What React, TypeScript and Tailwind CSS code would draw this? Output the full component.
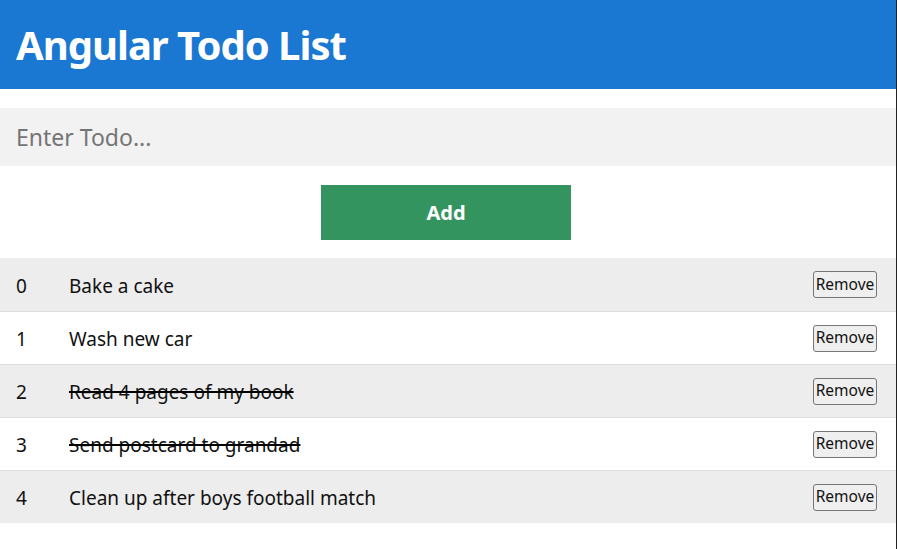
import React, { useState } from "react";

interface Todo {
    id: number;
    text: string;
    done: boolean;
}

const initialTodos: Todo[] = [
    { id: 0, text: "Bake a cake", done: false },
    { id: 1, text: "Wash new car", done: false },
    { id: 2, text: "Read 4 pages of my book", done: true },
    { id: 3, text: "Send postcard to grandad", done: true },
    { id: 4, text: "Clean up after boys football match", done: false },
];

export default function App() {
    const [todos, setTodos] = useState<Todo[]>(initialTodos);
    const [value, setValue] = useState("");

    const handleAdd = () => {
        if (value.trim() === "") return;
        setTodos([...todos, { id: todos.length, text: value, done: false }]);
        setValue("");
    };

    const handleRemove = (idx: number) => {
        setTodos(todos.filter((_, i) => i !== idx));
    };

    const toggle = (idx: number) => {
        setTodos(todos.map((t, i) => (i === idx ? { ...t, done: !t.done } : t)));
    };

    return (
        <div
            className="min-h-[549px] w-[897px] bg-white border-r border-[#222] text-[#111]"
            style={{ fontFamily: '"Noto Sans", "Open Sans", sans-serif' }}
        >
            <header className="h-[89px] bg-[#1a77d2] flex items-center px-4">
                <h1 className="text-[40px] font-bold text-white tracking-[-1px]">Angular Todo List</h1>
            </header>

            {/* input */}
            <input
                type="text"
                value={value}
                onChange={(e) => setValue(e.target.value)}
                placeholder="Enter Todo..."
                className="mt-[19px] block w-full h-[58px] bg-[#f2f2f2] px-4 text-[23px] outline-none placeholder:text-[#757575]"
            />

            <button
                onClick={handleAdd}
                className="mt-[19px] ml-[321px] block w-[250px] h-[55px] bg-[#33945f] text-white text-[20px] font-bold"
            >
                Add
            </button>

            <ul className="mt-[18px]">
                {todos.map((todo, idx) => (
                    <li
                        key={idx}
                        className={
                            "h-[53px] flex items-center pl-4 pr-[19px] text-[19px] " +
                            (idx > 0 ? "border-t border-[#dddddd] " : "") +
                            (idx % 2 === 0 ? "bg-[#ededed]" : "bg-white")
                        }
                    >
                        <span className="w-[53px] pt-[3px]">{idx}</span>
                        <span
                            onClick={() => toggle(idx)}
                            className={
                                "flex-1 pt-[3px] cursor-pointer " +
                                (todo.done ? "line-through decoration-2 decoration-black" : "")
                            }
                        >
                            {todo.text}
                        </span>
                        <button
                            onClick={() => handleRemove(idx)}
                            className="h-[27px] w-[64px] border border-[#767676] rounded-[3px] bg-[#efefef] text-[15.5px] leading-none text-[#111]"
                        >
                            Remove
                        </button>
                    </li>
                ))}
            </ul>
        </div>
    );
}
